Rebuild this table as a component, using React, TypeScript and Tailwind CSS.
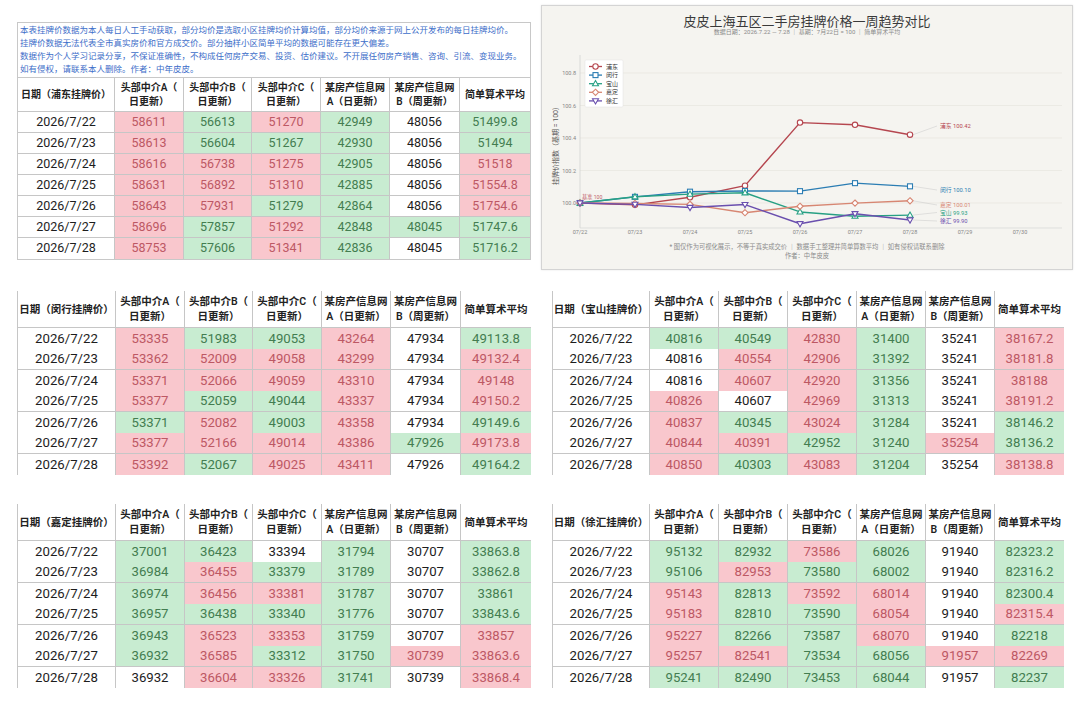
import React from 'react';

type Tone = 'r' | 'g' | 'w';

const DATES = ['2026/7/22', '2026/7/23', '2026/7/24', '2026/7/25', '2026/7/26', '2026/7/27', '2026/7/28'];

// value + tone letter: r = up (red fill), g = down (green fill), w = unchanged
const DATA: Record<string, string[]> = {
  浦东: [
    '58611r 56613g 51270r 42949g 48056w 51499.8g',
    '58613r 56604g 51267g 42930g 48056w 51494g',
    '58616r 56738r 51275r 42905g 48056w 51518r',
    '58631r 56892r 51310r 42885g 48056w 51554.8r',
    '58643r 57931r 51279g 42864g 48056w 51754.6r',
    '58696r 57857g 51292r 42848g 48045g 51747.6g',
    '58753r 57606g 51341r 42836g 48045w 51716.2g',
  ],
  闵行: [
    '53335r 51983g 49053g 43264r 47934w 49113.8g',
    '53362r 52009r 49058r 43299r 47934w 49132.4r',
    '53371r 52066r 49059r 43310r 47934w 49148r',
    '53377r 52059g 49044g 43337r 47934w 49150.2r',
    '53371g 52082r 49003g 43358r 47934w 49149.6g',
    '53377r 52166r 49014r 43386r 47926g 49173.8r',
    '53392r 52067g 49025r 43411r 47926w 49164.2g',
  ],
  宝山: [
    '40816g 40549g 42830r 31400g 35241w 38167.2r',
    '40816w 40554r 42906r 31392g 35241w 38181.8r',
    '40816w 40607r 42920r 31356g 35241w 38188r',
    '40826r 40607w 42969r 31313g 35241w 38191.2r',
    '40837r 40345g 43024r 31284g 35241w 38146.2g',
    '40844r 40391r 42952g 31240g 35254r 38136.2g',
    '40850r 40303g 43083r 31204g 35254w 38138.8r',
  ],
  嘉定: [
    '37001g 36423g 33394w 31794g 30707w 33863.8g',
    '36984g 36455r 33379g 31789g 30707w 33862.8g',
    '36974g 36456r 33381r 31787g 30707w 33861g',
    '36957g 36438g 33340g 31776g 30707w 33843.6g',
    '36943g 36523r 33353r 31759g 30707w 33857r',
    '36932g 36585r 33312g 31750g 30739r 33863.6r',
    '36932w 36604r 33326r 31741g 30739w 33868.4r',
  ],
  徐汇: [
    '95132g 82932g 73586r 68026g 91940w 82323.2g',
    '95106g 82953r 73580g 68002g 91940w 82316.2g',
    '95143r 82813g 73592r 68014r 91940w 82300.4g',
    '95183r 82810g 73590g 68054r 91940w 82315.4r',
    '95227r 82266g 73587g 68070r 91940w 82218g',
    '95257r 82541r 73534g 68056g 91957r 82269r',
    '95241g 82490g 73453g 68044g 91957w 82237g',
  ],
};

const HEAD = [
  ['头部中介A（', '日更新）'],
  ['头部中介B（', '日更新）'],
  ['头部中介C（', '日更新）'],
  ['某房产信息网', 'A（日更新）'],
  ['某房产信息网', 'B（周更新）'],
  ['简单算术平均'],
];

const TONE: Record<Tone, string> = {
  r: 'bg-[#f9c7cd] text-[#bd5864]',
  g: 'bg-[#c8ecd1] text-[#437d50]',
  w: 'bg-white text-[#1d1d1d]',
};

function DistrictTable({ district, cols, top }: { district: string; cols: string; top?: boolean }) {
  const rows = DATA[district].map((r) =>
    r.split(' ').map((t) => ({ v: t.slice(0, -1), tone: t.slice(-1) as Tone }))
  );
  const head = top
    ? 'h-[34px] text-[10px] leading-[14px]'
    : 'h-[37px] text-[10.5px] leading-[15px]';
  const num = top ? 'text-[12.5px]' : 'text-[13.2px]';

  return (
    <div className={`grid ${cols} ${top ? 'border-[#cbcbcb]' : 'border-l border-[#c6c6c6]'}`}>
      <div className={`flex items-center justify-center border-r border-b border-[#c6c6c6] font-semibold text-[#222] ${head}`}>
        日期（{district}挂牌价）
      </div>
      {HEAD.map((h, i) => (
        <div
          key={i}
          className={`flex flex-col items-center justify-center border-b border-[#c6c6c6] text-center font-semibold text-[#222] ${
            i < 5 ? 'border-r' : ''
          } ${head}`}
        >
          {h.map((l) => (
            <span key={l}>{l}</span>
          ))}
        </div>
      ))}
      {rows.map((cells, ri) => {
        const sep = top ? ri < 6 : ri === 1 || ri === 3 || ri === 5;
        return (
          <React.Fragment key={ri}>
            <div
              className={`flex h-[21px] items-center justify-center border-r border-[#c6c6c6] bg-white text-[#1d1d1d] ${num} ${
                sep ? 'border-b' : ''
              }`}
            >
              {DATES[ri]}
            </div>
            {cells.map((c, ci) => (
              <div
                key={ci}
                className={`flex h-[21px] items-center justify-center border-[#c6c6c6] ${TONE[c.tone]} ${num} ${
                  ci < 5 ? 'border-r' : ''
                } ${sep ? 'border-b' : ''}`}
              >
                {c.v}
              </div>
            ))}
          </React.Fragment>
        );
      })}
    </div>
  );
}

type Shape = 'circle' | 'square' | 'up' | 'diamond' | 'down';

const SERIES: { name: string; color: string; shape: Shape; label: string; ly: number }[] = [
  { name: '浦东', color: '#b5464f', shape: 'circle', label: '浦东 100.42', ly: 126 },
  { name: '闵行', color: '#2b7db3', shape: 'square', label: '闵行 100.10', ly: 190 },
  { name: '宝山', color: '#27a084', shape: 'up', label: '宝山 99.93', ly: 212.5 },
  { name: '嘉定', color: '#d78672', shape: 'diamond', label: '嘉定 100.01', ly: 205 },
  { name: '徐汇', color: '#6a4fae', shape: 'down', label: '徐汇 99.90', ly: 221 },
];

function Marker({ shape, x, y, c }: { shape: Shape; x: number; y: number; c: string }) {
  const p = { fill: '#fff', stroke: c, strokeWidth: 1.1 };
  if (shape === 'circle') return <circle cx={x} cy={y} r={2.7} {...p} />;
  if (shape === 'square') return <rect x={x - 2.5} y={y - 2.5} width={5} height={5} {...p} />;
  if (shape === 'up') return <polygon points={`${x},${y - 3.1} ${x + 3},${y + 2.1} ${x - 3},${y + 2.1}`} {...p} />;
  if (shape === 'down') return <polygon points={`${x},${y + 3.1} ${x + 3},${y - 2.1} ${x - 3},${y - 2.1}`} {...p} />;
  return <polygon points={`${x},${y - 3.1} ${x + 3.1},${y} ${x},${y + 3.1} ${x - 3.1},${y}`} {...p} />;
}

function TrendChart() {
  const X = (i: number) => 580 + 55 * i;
  const Y = (v: number) => 203 - (v - 100) * 162.5;
  const series = SERIES.map((s) => {
    const avgs = DATA[s.name].map((r) => parseFloat(r.split(' ')[5]));
    return { ...s, vals: avgs.map((a) => (a / avgs[0]) * 100) };
  });
  const ticks = [100.0, 100.2, 100.4, 100.6, 100.8];
  const days = ['07/22', '07/23', '07/24', '07/25', '07/26', '07/27', '07/28', '07/29', '07/30'];

  return (
    <div className="ml-[10px] flex h-[265px] w-[532px] flex-col border border-[#d4d4d4] bg-[#f5f4f0] shadow-[0_0_2px_rgba(0,0,0,0.1)]">
      <div className="pt-[9px] text-center text-[13px] leading-[14px] text-[#3a3a3a]">
        皮皮上海五区二手房挂牌价格一周趋势对比
      </div>
      <div className="text-center text-[6px] leading-[6px] text-[#8a8a8a]">
        数据日期：2026.7.22 — 7.28 ｜ 基期：7月22日 = 100 ｜ 简单算术平均
      </div>
      <svg width={530} height={208} viewBox="542 35 530 208" className="block">
        {ticks.map((t) => (
          <g key={t}>
            <line x1={580} x2={1062} y1={Y(t)} y2={Y(t)} stroke="#e4e2dc" strokeWidth={0.6} />
            <text x={576} y={Y(t) + 2} fontSize={5.5} fill="#858585" textAnchor="end">
              {t.toFixed(1)}
            </text>
          </g>
        ))}
        <line x1={580} x2={580} y1={55} y2={228} stroke="#cfcfcf" strokeWidth={0.7} />
        <line x1={580} x2={1062} y1={228} y2={228} stroke="#d6d6d6" strokeWidth={0.7} />
        {days.map((d, i) => (
          <text key={d} x={X(i)} y={234} fontSize={5.5} fill="#858585" textAnchor="middle">
            {d}
          </text>
        ))}
        <text x={558} y={144} fontSize={7} fill="#555" textAnchor="middle" transform="rotate(-90 558 144)">
          挂牌价指数（基期 = 100）
        </text>
        <text x={582} y={199} fontSize={5.2} fill="#c0616a">
          基准 100
        </text>

        {series.map((s) => (
          <g key={s.name}>
            <line x1={X(6) + 3} y1={Y(s.vals[6])} x2={937} y2={s.ly} stroke="#c9c9c9" strokeWidth={0.5} />
            <text x={940} y={s.ly + 2} fontSize={5.8} fill={s.color}>
              {s.label}
            </text>
          </g>
        ))}

        {series.map((s) => (
          <g key={s.name}>
            <polyline
              points={s.vals.map((v, i) => `${X(i)},${Y(v)}`).join(' ')}
              fill="none"
              stroke={s.color}
              strokeWidth={1.4}
              strokeLinejoin="round"
            />
            {s.vals.map((v, i) => (
              <Marker key={i} shape={s.shape} x={X(i)} y={Y(v)} c={s.color} />
            ))}
          </g>
        ))}

        <rect x={585} y={60} width={38} height={47} fill="#fff" stroke="#e0e0e0" strokeWidth={0.5} rx={1} />
        {series.map((s, k) => {
          const y = 66.5 + 8.6 * k;
          return (
            <g key={s.name}>
              <line x1={589} x2={602} y1={y} y2={y} stroke={s.color} strokeWidth={1.3} />
              <Marker shape={s.shape} x={595.5} y={y} c={s.color} />
              <text x={606} y={y + 2} fontSize={6} fill="#333">
                {s.name}
              </text>
            </g>
          );
        })}
      </svg>
      <div className="text-center text-[6.3px] leading-[8.5px] text-[#8c8c8c]">
        * 图仅作为可视化展示，不等于真实成交价 ｜ 数据手工整理并简单算数平均 ｜ 如有侵权请联系删除
      </div>
      <div className="text-center text-[6.3px] leading-[8.5px] text-[#8c8c8c]">作者：中年皮皮</div>
    </div>
  );
}

export default function App() {
  const leftCols = 'grid-cols-[98px_69px_68px_69px_69px_70px_70px]';
  const rightCols = 'grid-cols-[97px_69px_69px_69px_69px_69px_69px]';

  return (
    <div className="h-[705px] w-[1080px] overflow-hidden bg-white [font-family:Roboto,'Noto_Sans_CJK_SC',sans-serif]">
      {/* notes + Pudong table, trend chart */}
      <div className="flex items-start pt-[5px]">
        <div className="ml-[17px] mt-[17px] w-[514px] border border-[#c8c8c8]">
          <div className="h-[55px] border-b border-[#c8c8c8] pl-[2px] pt-[1px] text-[8.5px] leading-[13px] text-[#3d6ec9]">
            <p>本表挂牌价数据为本人每日人工手动获取，部分均价是选取小区挂牌均价计算均值，部分均价来源于网上公开发布的每日挂牌均价。</p>
            <p>挂牌价数据无法代表全市真实房价和官方成交价。部分抽样小区简单平均的数据可能存在更大偏差。</p>
            <p>数据作为个人学习记录分享，不保证准确性，不构成任何房产交易、投资、估价建议。不开展任何房产销售、咨询、引流、变现业务。</p>
            <p>如有侵权，请联系本人删除。作者：中年皮皮。</p>
          </div>
          <DistrictTable district="浦东" cols="grid-cols-[97px_69px_68px_69px_69px_70px_70px]" top />
        </div>
        <TrendChart />
      </div>

      {/* Minhang, Baoshan */}
      <div className="mt-[21px] flex">
        <div className="ml-[17px] w-[514px]">
          <DistrictTable district="闵行" cols={leftCols} />
        </div>
        <div className="ml-[21px] w-[512px]">
          <DistrictTable district="宝山" cols={rightCols} />
        </div>
      </div>

      {/* Jiading, Xuhui */}
      <div className="mt-[29px] flex">
        <div className="ml-[17px] w-[514px]">
          <DistrictTable district="嘉定" cols={leftCols} />
        </div>
        <div className="ml-[21px] w-[512px]">
          <DistrictTable district="徐汇" cols={rightCols} />
        </div>
      </div>
    </div>
  );
}
